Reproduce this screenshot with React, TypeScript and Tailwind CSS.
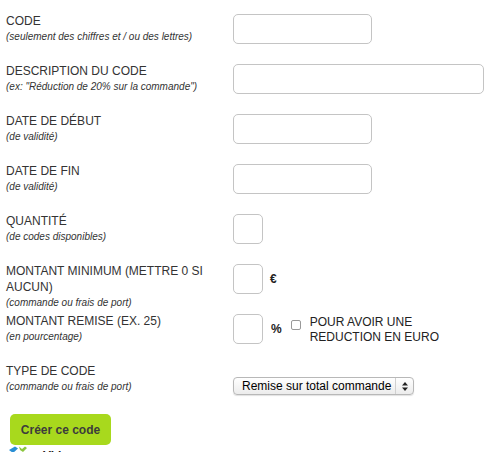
import React from 'react';

const rowCls = 'flex items-start h-[50px]';
const labelCls = 'w-[227px] shrink-0 pr-3';
const titleCls = 'text-[12px] leading-[16px] uppercase';
const subCls = 'text-[10px] leading-[13px] italic mt-[1px]';
const inputCls =
  'mt-px h-[30px] rounded-[5px] border border-[#c4c4c4] bg-white outline-none';

function Label({ title, sub }: { title: string; sub: string }) {
  return (
    <div className={labelCls}>
      <div className={titleCls}>{title}</div>
      <div className={subCls}>{sub}</div>
    </div>
  );
}

export default function App() {
  return (
    <div className="w-[500px] h-[452px] overflow-hidden bg-white pl-[6px] pt-[13px] font-['Liberation_Sans',Arial,sans-serif] text-[#333]">
      <div className={rowCls}>
        <Label title="Code" sub="(seulement des chiffres et / ou des lettres)" />
        <input className={`${inputCls} w-[139px]`} />
      </div>

      <div className={rowCls}>
        <Label title="Description du code" sub={'(ex: "Réduction de 20% sur la commande")'} />
        <input className={`${inputCls} w-[251px]`} />
      </div>

      <div className={rowCls}>
        <Label title="Date de début" sub="(de validité)" />
        <input className={`${inputCls} w-[139px]`} />
      </div>

      <div className={rowCls}>
        <Label title="Date de fin" sub="(de validité)" />
        <input className={`${inputCls} w-[139px]`} />
      </div>

      <div className={rowCls}>
        <Label title="Quantité" sub="(de codes disponibles)" />
        <input className={`${inputCls} w-[30px]`} />
      </div>

      <div className={rowCls}>
        <Label title="Montant minimum (mettre 0 si aucun)" sub="(commande ou frais de port)" />
        <div className="flex items-center">
          <input className={`${inputCls} w-[30px]`} />
          <span className="ml-[7px] text-[12px] font-bold text-[#222]">€</span>
        </div>
      </div>

      <div className={rowCls}>
        <Label title="Montant remise (ex. 25)" sub="(en pourcentage)" />
        <div className="flex items-start">
          <input className={`${inputCls} w-[30px]`} />
          <span className="ml-[8px] mt-[8px] text-[12px] font-bold leading-[16px] text-[#222]">%</span>
          <span className="ml-[9px] mt-[7px] h-[10px] w-[10px] rounded-[2px] border border-[#999] bg-white" />
          <div className="ml-[9px] mt-[2px] text-[12px] leading-[15px] uppercase text-[#222]">
            Pour avoir une
            <br />
            reduction en euro
          </div>
        </div>
      </div>

      <div className={rowCls}>
        <Label title="Type de code" sub="(commande ou frais de port)" />
        <div className="mt-[14px] flex h-[18px] w-[181px] items-center rounded-[4px] border border-[#b8b8b8] bg-gradient-to-b from-white to-[#ececec] shadow-[0_1px_1px_rgba(0,0,0,0.12)]">
          <span className="flex-1 pl-[8px] text-[12px] leading-[16px] text-black">
            Remise sur total commande
          </span>
          <span className="flex h-full w-[18px] items-center justify-center border-l border-[#d0d0d0]">
            <svg width="6" height="9" viewBox="0 0 6 9">
              <path d="M3 0 L6 3.5 H0 Z" fill="#222" />
              <path d="M3 9 L6 5.5 H0 Z" fill="#222" />
            </svg>
          </span>
        </div>
      </div>

      <button className="ml-[4px] mt-[1px] h-[31px] w-[101px] rounded-[5px] bg-[#a8d91d] text-[12px] font-bold text-[#3c3c3c]">
        Créer ce code
      </button>

      <div className="mt-[1px] flex items-start">
        <svg width="22" height="8" viewBox="0 0 22 8" className="ml-[1px]">
          <path d="M2 4 L8 0.5 L11 2.5 L6 7 Z" fill="#2a8fd4" />
          <path d="M12 0.5 L15 3 L18 0.5 L20 2 L16 6 L13 4 Z" fill="#8cc63f" />
        </svg>
        <span className="ml-[14px] mt-[3px] text-[12px] font-bold leading-[14px] text-[#222]">Vide</span>
      </div>
    </div>
  );
}
